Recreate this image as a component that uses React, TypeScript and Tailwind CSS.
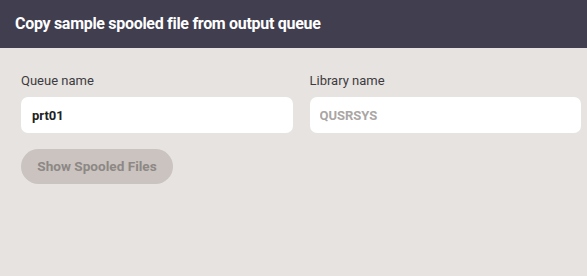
export default function App() {
  return (
    <div className="w-[587px] h-[276px] bg-[#e7e3e0] font-['Roboto',sans-serif] flex flex-col">
      <div className="h-[48px] bg-[#413e4f] flex items-center px-[15px] shrink-0">
        <h1 className="text-white text-[16px] font-bold tracking-[-0.3px]">Copy sample spooled file from output queue</h1>
      </div>
      <div className="flex flex-col pl-[21px] pr-[6px] pt-[24px]">
        <div className="flex gap-[17px]">
          <label className="flex-1 flex flex-col">
            <span className="text-[13px] text-[#3d3b3f] leading-[18px] mb-[7px]">Queue name</span>
            <input
              defaultValue="prt01"
              className="h-[36px] rounded-[7px] bg-white px-[11px] text-[13px] font-bold text-[#222] outline-none"
            />
          </label>
          <label className="flex-1 flex flex-col">
            <span className="text-[13px] text-[#3d3b3f] leading-[18px] mb-[7px]">Library name</span>
            <input
              placeholder="QUSRSYS"
              className="h-[36px] rounded-[7px] bg-white px-[10px] text-[13px] font-bold text-[#222] placeholder:text-[#a9a6a4] outline-none"
            />
          </label>
        </div>
        <div className="mt-[16px]">
          <button
            disabled
            className="h-[35px] w-[152px] rounded-full bg-[#cac3bf] text-[13.6px] font-bold text-[#8d8885]"
          >
            Show Spooled Files
          </button>
        </div>
      </div>
    </div>
  );
}
